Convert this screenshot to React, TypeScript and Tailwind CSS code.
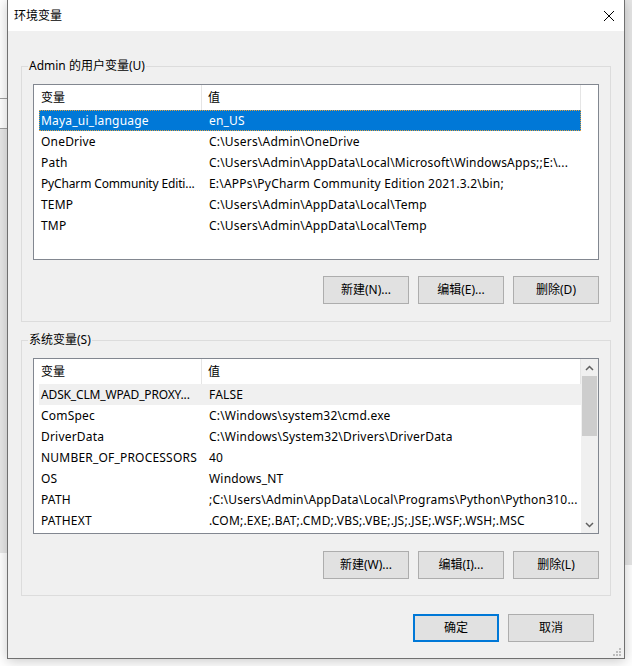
import React from 'react';

// user / system variable rows: [name, value]
const USER_VARS: [string, string][] = [
  ['Maya_ui_language', 'en_US'],
  ['OneDrive', 'C:\\Users\\Admin\\OneDrive'],
  ['Path', 'C:\\Users\\Admin\\AppData\\Local\\Microsoft\\WindowsApps;;E:\\...'],
  ['PyCharm Community Editi...', 'E:\\APPs\\PyCharm Community Edition 2021.3.2\\bin;'],
  ['TEMP', 'C:\\Users\\Admin\\AppData\\Local\\Temp'],
  ['TMP', 'C:\\Users\\Admin\\AppData\\Local\\Temp'],
];

const SYSTEM_VARS: [string, string][] = [
  ['ADSK_CLM_WPAD_PROXY...', 'FALSE'],
  ['ComSpec', 'C:\\Windows\\system32\\cmd.exe'],
  ['DriverData', 'C:\\Windows\\System32\\Drivers\\DriverData'],
  ['NUMBER_OF_PROCESSORS', '40'],
  ['OS', 'Windows_NT'],
  ['PATH', ';C:\\Users\\Admin\\AppData\\Local\\Programs\\Python\\Python310...'],
  ['PATHEXT', '.COM;.EXE;.BAT;.CMD;.VBS;.VBE;.JS;.JSE;.WSF;.WSH;.MSC'],
];

const Chevron = ({ down }: { down?: boolean }) => (
  <svg width="9" height="6" viewBox="0 0 9 6" className={down ? 'rotate-180' : ''}>
    <path d="M1 5 L4.5 1.5 L8 5" fill="none" stroke="#606060" strokeWidth="1.5" />
  </svg>
);

const WinButton = ({ label, primary }: { label: string; primary?: boolean }) => (
  <button
    className={
      primary
        ? 'w-[86px] h-[28px] bg-[#e1e1e1] border-2 border-[#0078d7] text-[12px] text-black'
        : 'w-[86px] h-[28px] bg-[#e1e1e1] border border-[#adadad] text-[12px] text-black'
    }
  >
    {label}
  </button>
);

const VarList = ({
  rows,
  selected,
  hovered,
  scrollbar,
}: {
  rows: [string, string][];
  selected?: number;
  hovered?: number;
  scrollbar?: boolean;
}) => (
  <div className="h-[176px] border border-[#828790] bg-white flex overflow-hidden">
    <div className="flex-1 flex flex-col overflow-hidden">
      {/* column header */}
      <div className="flex h-[25px] shrink-0 items-center text-[12px]">
        <div className="w-[168px] h-full pl-[7px] flex items-center border-r border-[#e5e5e5]">变量</div>
        <div className="w-[379px] h-full pl-[6px] flex items-center border-r border-[#e5e5e5]">值</div>
      </div>
      {rows.map(([name, value], i) => {
        const isSel = i === selected;
        const isHover = i === hovered;
        // truncated names are squeezed a bit so the ellipsis fits like the native list
        const clipped = name.endsWith('...');
        return (
          <div
            key={name}
            className={
              isSel
                ? 'ml-[5px] w-[542px] h-[21px] shrink-0 flex items-center tracking-[0.2px] bg-[#0078d7] text-white outline-1 outline-dotted outline-[#e0a040] -outline-offset-1'
                : isHover
                ? 'ml-[5px] w-[542px] h-[21px] shrink-0 flex items-center tracking-[0.2px] bg-[#f0f0f0] text-black'
                : 'ml-[5px] w-[542px] h-[21px] shrink-0 flex items-center tracking-[0.2px] text-black'
            }
          >
            <div
              className={
                clipped
                  ? 'w-[163px] shrink-0 pl-[2px] whitespace-nowrap tracking-[-0.15px]'
                  : 'w-[163px] shrink-0 pl-[2px] whitespace-nowrap'
              }
            >
              {name}
            </div>
            <div className="flex-1 pl-[7px] whitespace-nowrap overflow-hidden">{value}</div>
          </div>
        );
      })}
    </div>
    {scrollbar && (
      <div className="w-[17px] shrink-0 bg-[#f0f0f0] flex flex-col">
        <div className="h-[17px] flex items-center justify-center">
          <Chevron />
        </div>
        <div className="mx-px h-[60px] bg-[#cdcdcd]" />
        <div className="flex-1" />
        <div className="h-[17px] flex items-center justify-center">
          <Chevron down />
        </div>
      </div>
    )}
  </div>
);

const GroupBox = ({ title, children }: { title: string; children: React.ReactNode }) => (
  <fieldset className="border border-[#dcdcdc]">
    <legend className="ml-[6px] px-px leading-[16px] text-[12px] text-black">{title}</legend>
    <div className="px-[11px] pt-[10px]">{children}</div>
  </fieldset>
);

export default function App() {
  return (
    <div
      className="relative w-[632px] h-[666px] bg-white overflow-hidden text-[12px]"
      style={{ fontFamily: '"Noto Sans", "Noto Sans CJK SC", sans-serif' }}
    >
      {/* desktop behind the dialog */}
      <div className="absolute left-0 top-[98px] w-[7px] h-px bg-[#a0a0a0]" />
      <div className="absolute left-0 top-[128px] w-[7px] h-px bg-[#a0a0a0]" />
      <div className="absolute left-0 top-[129px] w-[7px] h-[424px] bg-[#e8e8e8]" />
      <div className="absolute right-0 top-0 w-[7px] h-[565px] bg-[#e6e6e6]" />

      {/* dialog window */}
      <div className="absolute left-[7px] top-[-1px] w-[618px] h-[660px] border border-[#707070] bg-[#f0f0f0] flex flex-col shadow-[0_2px_12px_rgba(0,0,0,0.22)]">
        <div className="h-[31px] shrink-0 bg-white flex items-center justify-between pl-[6px] pr-[10px]">
          <span className="text-black">环境变量</span>
          <svg width="10" height="10" viewBox="0 0 10 10">
            <path d="M0 0 L10 10 M10 0 L0 10" stroke="#000" strokeWidth="1" />
          </svg>
        </div>

        <div className="flex-1 flex flex-col px-[13px] pt-[27px]">
          <GroupBox title="Admin 的用户变量(U)">
            <VarList rows={USER_VARS} selected={0} />
            <div className="flex justify-end gap-[9px] mt-[16px] mb-[17px]">
              <WinButton label="新建(N)..." />
              <WinButton label="编辑(E)..." />
              <WinButton label="删除(D)" />
            </div>
          </GroupBox>

          <div className="mt-[10px]">
            <GroupBox title="系统变量(S)">
              <VarList rows={SYSTEM_VARS} hovered={0} scrollbar />
              <div className="flex justify-end gap-[9px] mt-[17px] mb-[16px]">
                <WinButton label="新建(W)..." />
                <WinButton label="编辑(I)..." />
                <WinButton label="删除(L)" />
              </div>
            </GroupBox>
          </div>

          <div className="flex justify-end gap-[9px] mt-[18px] pr-[17px]">
            <WinButton label="确定" primary />
            <WinButton label="取消" />
          </div>
        </div>

        {/* resize grip */}
        <div className="absolute right-[3px] bottom-[2px] grid grid-cols-3 gap-px">
          <span className="w-[2px] h-[2px]" />
          <span className="w-[2px] h-[2px]" />
          <span className="w-[2px] h-[2px] bg-[#bcbcbc]" />
          <span className="w-[2px] h-[2px]" />
          <span className="w-[2px] h-[2px] bg-[#bcbcbc]" />
          <span className="w-[2px] h-[2px] bg-[#bcbcbc]" />
          <span className="w-[2px] h-[2px] bg-[#bcbcbc]" />
          <span className="w-[2px] h-[2px] bg-[#bcbcbc]" />
          <span className="w-[2px] h-[2px] bg-[#bcbcbc]" />
        </div>
      </div>
    </div>
  );
}
